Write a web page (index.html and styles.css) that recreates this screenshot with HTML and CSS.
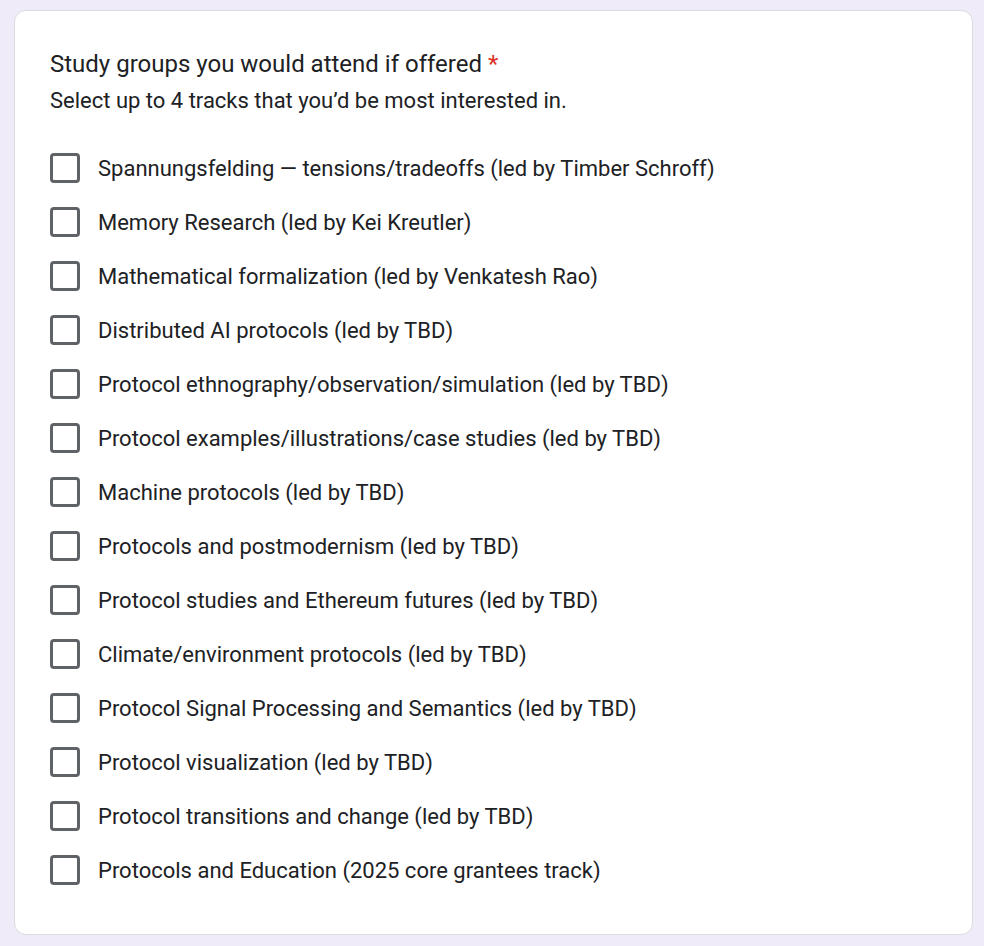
FILE: index.html
```html
<!DOCTYPE html>
<html>
<head>
<meta charset="utf-8">
<link rel="stylesheet" href="styles.css">
</head>
<body>
<div class="card">
  <div class="title">Study groups you would attend if offered <span class="req">*</span></div>
  <div class="desc">Select up to 4 tracks that you’d be most interested in.</div>
  <div class="options">
    <label class="opt"><span class="box"></span><span class="txt">Spannungsfelding — tensions/tradeoffs (led by Timber Schroff)</span></label>
    <label class="opt"><span class="box"></span><span class="txt">Memory Research (led by Kei Kreutler)</span></label>
    <label class="opt"><span class="box"></span><span class="txt">Mathematical formalization (led by Venkatesh Rao)</span></label>
    <label class="opt"><span class="box"></span><span class="txt">Distributed AI protocols (led by TBD)</span></label>
    <label class="opt"><span class="box"></span><span class="txt">Protocol ethnography/observation/simulation (led by TBD)</span></label>
    <label class="opt"><span class="box"></span><span class="txt">Protocol examples/illustrations/case studies (led by TBD)</span></label>
    <label class="opt"><span class="box"></span><span class="txt">Machine protocols (led by TBD)</span></label>
    <label class="opt"><span class="box"></span><span class="txt">Protocols and postmodernism (led by TBD)</span></label>
    <label class="opt"><span class="box"></span><span class="txt">Protocol studies and Ethereum futures (led by TBD)</span></label>
    <label class="opt"><span class="box"></span><span class="txt">Climate/environment protocols (led by TBD)</span></label>
    <label class="opt"><span class="box"></span><span class="txt">Protocol Signal Processing and Semantics (led by TBD)</span></label>
    <label class="opt"><span class="box"></span><span class="txt">Protocol visualization (led by TBD)</span></label>
    <label class="opt"><span class="box"></span><span class="txt">Protocol transitions and change (led by TBD)</span></label>
    <label class="opt"><span class="box"></span><span class="txt">Protocols and Education (2025 core grantees track)</span></label>
  </div>
</div>
</body>
</html>
```
FILE: styles.css
```css
html, body {
  margin: 0;
  padding: 0;
}
body {
  background: #f0ebf8;
  font-family: Roboto, "Liberation Sans", sans-serif;
  color: #202124;
  padding: 10px 11px 11px 14px;
  height: 946px;
  box-sizing: border-box;
}
.card {
  background: #fff;
  border: 1px solid #dadce0;
  border-radius: 12px;
  padding: 35px 35px 0 35px;
  height: 925px;
  box-sizing: border-box;
}
.title {
  font-size: 24px;
  line-height: 36px;
}
.req {
  color: #d93025;
}
.desc {
  font-size: 22px;
  line-height: 30px;
  margin-top: 4px;
}
.options {
  margin-top: 25px;
  display: flex;
  flex-direction: column;
}
.opt {
  display: flex;
  align-items: center;
  height: 54px;
  gap: 18px;
}
.box {
  width: 30px;
  height: 30px;
  box-sizing: border-box;
  border: 3px solid #5f6368;
  border-radius: 4px;
  flex: none;
}
.txt {
  font-size: 22px;
}
```
